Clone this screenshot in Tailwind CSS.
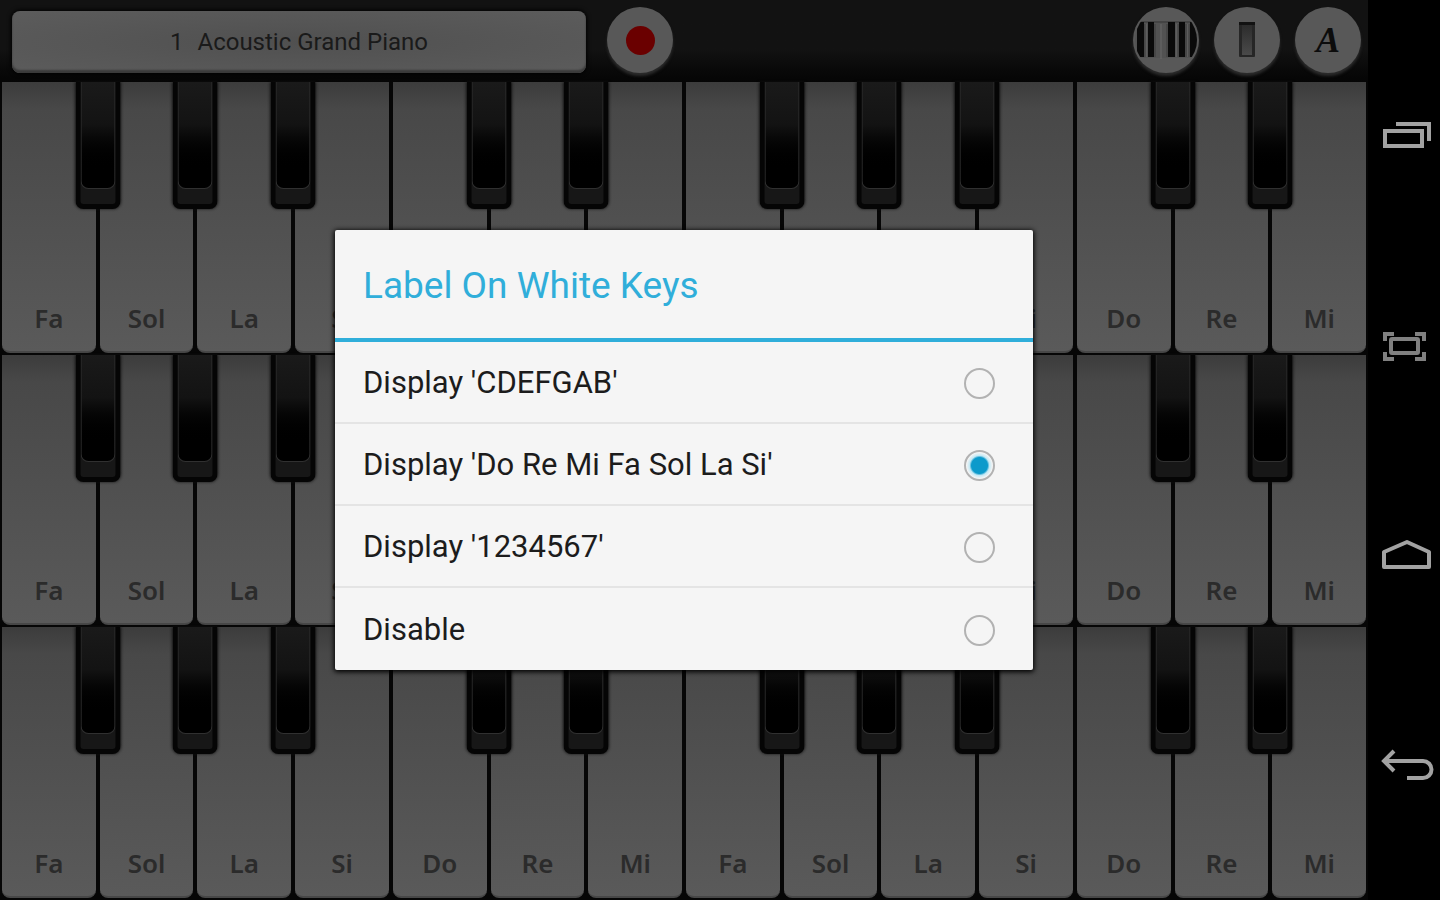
<!DOCTYPE html>
<html lang="en">
<head>
    <meta charset="UTF-8">
    <meta name="viewport" content="width=device-width, initial-scale=1.0">
    <title>Piano</title>
    <script src="https://cdn.jsdelivr.net/npm/@tailwindcss/browser@4"></script>
</head>
<body class="bg-black font-['Roboto',sans-serif]">
    <div class="flex h-screen overflow-hidden">
        <main class="relative flex min-w-0 flex-1 flex-col">
            <!-- Toolbar -->
            <header class="flex h-[82px] shrink-0 items-center bg-linear-to-b from-[#121212] from-60% to-[#050505] pr-[7px] pb-[2px] pl-3">
                <button class="mt-1 h-[62px] w-[574px] rounded-lg bg-radial from-[#505050] to-[#5c5c5c] text-2xl text-[#1a1a1a] shadow-[inset_0_-3px_2px_#3a3a3a,0_0_4px_1px_#000]">
                    <span class="mr-2">1</span>
                    Acoustic Grand Piano
                </button>
                <button aria-label="Record" class="ml-[21px] flex size-[66px] items-center justify-center rounded-full bg-[#585858] shadow-[0_3px_3px_#2c2c2c]">
                    <span class="size-[29px] rounded-full bg-[#6a0000]"></span>
                </button>
                <div class="ml-auto flex gap-[15px]">
                    <button aria-label="Keyboard layout" class="size-[66px] rounded-full bg-[#585858] shadow-[0_3px_3px_#2c2c2c]">
                        <svg viewBox="0 0 66 66" class="size-full">
                            <clipPath id="disc"><circle cx="33" cy="33" r="31"/></clipPath>
                            <g clip-path="url(#disc)">
                                <path d="M0 15h66v36H0z" fill="#525252"/>
                                <path d="M0 15h66" stroke="#444" stroke-width="2"/>
                                <path d="M4 15h7v35H4zM15 15h6v35h-6zM35 15h7v35h-7zM46 15h6v35h-6zM57 15h7v35h-7z" fill="#0a0a0a"/>
                                <path d="M13 17v33M28 17v35M44 17v33M55 17v33" stroke="#686868"/>
                                <path d="M12 17v33M22 17v33M34 17v33M45 17v33M53 17v33M56 17v33" stroke="#3a3a3a"/>
                            </g>
                        </svg>
                    </button>
                    <button aria-label="Key width" class="size-[66px] rounded-full bg-[#585858] shadow-[0_3px_3px_#2c2c2c]">
                        <svg viewBox="0 0 66 66" class="size-full">
                            <linearGradient id="keyFace" x2="0" y2="1">
                                <stop offset="0" stop-color="#2c2c2c"/>
                                <stop offset="1" stop-color="#4a4a4a"/>
                            </linearGradient>
                            <rect x="25" y="15" width="16" height="35" rx="1" fill="#262626"/>
                            <path d="M25 15h16v3H25z" fill="#121212"/>
                            <rect x="28" y="18" width="10" height="30" fill="url(#keyFace)"/>
                        </svg>
                    </button>
                    <button aria-label="Key labels" class="size-[66px] rounded-full bg-[#585858] font-['Liberation_Serif',serif] text-4xl font-bold text-[#0c0c0c] italic shadow-[0_3px_3px_#2c2c2c]">A</button>
                </div>
            </header>

            <!-- Keyboard rows are filled in below -->
            <div id="keyboard" class="flex min-h-0 flex-1 flex-col"></div>

            <!-- Dialog -->
            <div class="absolute inset-0 z-20 flex items-center justify-center">
                <form role="dialog" aria-labelledby="dialogTitle" class="w-[698px] rounded-xs bg-[#f5f5f5] text-[31px] text-[#1c1c1c] shadow-[0_1px_5px_1px_#000]">
                    <h1 id="dialogTitle" class="border-b-4 border-[#30aeda] px-7 pt-[29px] pb-[25px] text-[37px] leading-[54px] font-normal text-[#30aeda]">Label On White Keys</h1>
                    <div id="options" class="divide-y-2 divide-[#e4e4e4]"></div>
                </form>
            </div>
        </main>

        <!-- System bar -->
        <nav class="flex w-18 shrink-0 flex-col py-[30px] text-[#a2a2a2]">
            <button aria-label="Recent apps" class="flex flex-1 items-center justify-center">
                <svg viewBox="0 0 54 54" class="ml-1 size-[54px]" fill="none" stroke="currentColor" stroke-width="4">
                    <path d="M6 23h37v15H6z"/>
                    <path d="M17 16h33v17"/>
                </svg>
            </button>
            <button aria-label="Screenshot" class="flex flex-1 items-center justify-center text-[#808080]">
                <svg viewBox="0 0 54 54" class="ml-[2px] size-[54px]" fill="none" stroke="currentColor">
                    <rect x="13" y="21" width="27" height="14" rx="1" stroke-width="4"/>
                    <path d="M7 23v-7h9M37 16h9v7M7 34v7h9M37 41h9v-7" stroke-width="4"/>
                </svg>
            </button>
            <button aria-label="Home" class="flex flex-1 items-center justify-center">
                <svg viewBox="0 0 54 54" class="ml-[6px] size-[54px]" fill="none" stroke="currentColor" stroke-width="4">
                    <path d="M4 39V24L27 14l22 10v15z" stroke-linejoin="round"/>
                </svg>
            </button>
            <button aria-label="Back" class="flex flex-1 items-center justify-center">
                <svg viewBox="0 0 54 54" class="ml-[6px] size-[54px]" fill="none" stroke="currentColor" stroke-width="4">
                    <path d="M5 23h38a8 8 0 0 1 0 17H27"/>
                    <path d="M14 13L4 23l10 10"/>
                </svg>
            </button>
        </nav>
    </div>

    <script>
        const notes = ['Fa', 'Sol', 'La', 'Si', 'Do', 'Re', 'Mi', 'Fa', 'Sol', 'La', 'Si', 'Do', 'Re', 'Mi'];
        const labels = ["Display 'CDEFGAB'", "Display 'Do Re Mi Fa Sol La Si'", "Display '1234567'", 'Disable'];

        // Si and Mi have no black key on their right
        const blackKey = `
            <button aria-label="Sharp" class="absolute top-0 right-0 z-10 h-[127px] w-[45px] translate-x-1/2 rounded-b-lg border-x-5 border-b-5 border-[#050505] bg-[#171717] pb-[15px] shadow-[0_0_3px_#111]">
                <span class="block h-full rounded-b-lg border border-t-0 border-[#303030] bg-linear-to-b from-[#1a1a1a] via-[#131313] via-40% to-black to-85%"></span>
            </button>`;

        const keyboard = document.getElementById('keyboard');
        for (let row = 0; row < 3; row++) {
            const keys = notes.map(note => `
                <div class="relative bg-[#060606] px-[2px] pb-[2px]">
                    <button class="flex h-full w-full items-end justify-center rounded-b-lg border-b-2 border-[#474747] bg-linear-to-b from-[#3c3c3c] via-[#484848] via-10% to-[#5a5a5a] pb-[15px] font-['Noto_Sans',sans-serif] text-[26px] leading-9 font-semibold text-[#2b2b2b]">${note}</button>
                    ${note === 'Si' || note === 'Mi' ? '' : blackKey}
                </div>`);
            keyboard.insertAdjacentHTML('beforeend', `<div class="grid min-h-0 flex-1 grid-cols-14">${keys.join('')}</div>`);
        }

        document.getElementById('options').innerHTML = labels.map((label, i) => `
            <label class="flex h-[82px] items-center justify-between pt-[2px] pr-[38px] pl-7">
                ${label}
                <input type="radio" name="keyLabel" ${i === 1 ? 'checked' : ''} class="size-[31px] appearance-none rounded-full border-2 border-[#b2b2b2] checked:bg-[radial-gradient(circle,#0c9acb_8px,#c4e9f5_10px,#f5f5f5_13px)]">
            </label>`).join('');
    </script>
</body>
</html>
